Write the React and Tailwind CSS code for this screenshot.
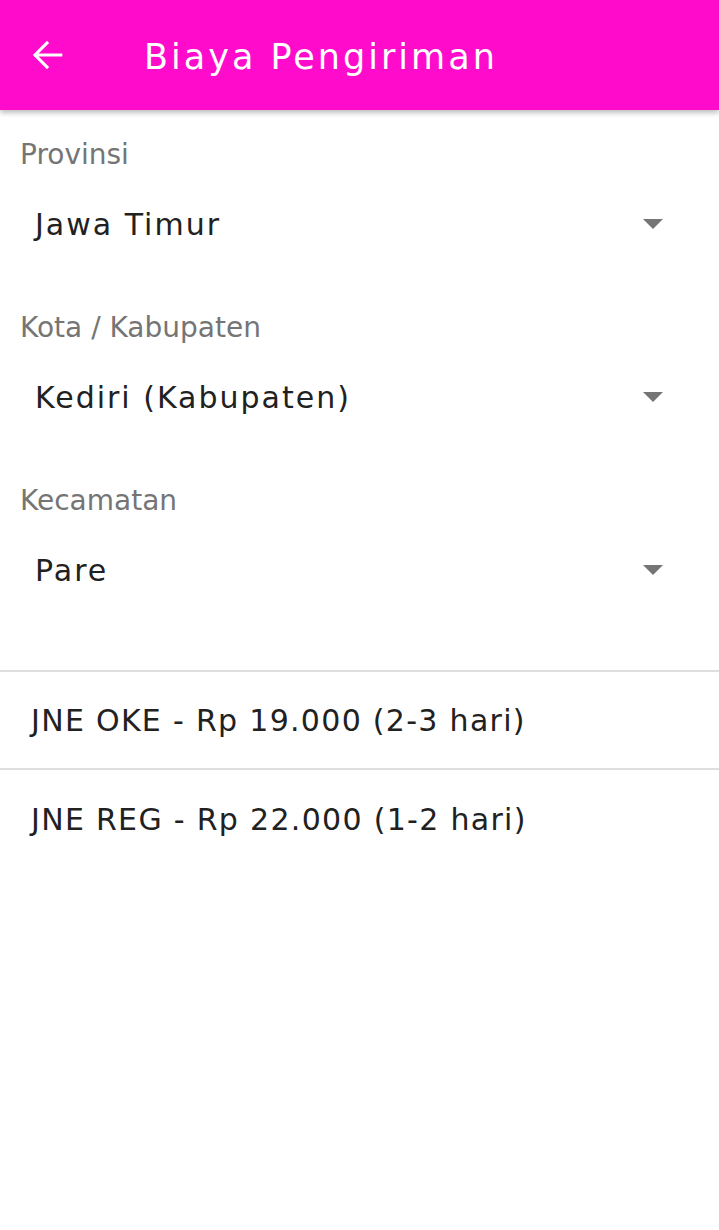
const FONT = { fontFamily: '"DejaVu Sans", "Liberation Sans", sans-serif' }

const FIELDS = [
  { label: 'Provinsi', value: 'Jawa Timur' },
  { label: 'Kota / Kabupaten', value: 'Kediri (Kabupaten)' },
  { label: 'Kecamatan', value: 'Pare' },
]

const SERVICES = [
  'JNE OKE - Rp 19.000 (2-3 hari)',
  'JNE REG - Rp 22.000 (1-2 hari)',
]

// material arrow_back
function BackArrow() {
  return (
    <svg width="46" height="46" viewBox="0 0 24 24" fill="white">
      <path d="M20 11.2H7.6l5.5-5.5L12 4.6l-7.4 7.4 7.4 7.4 1.1-1.1-5.5-5.5H20v-1.6z" />
    </svg>
  )
}

function SelectField({ label, value }) {
  return (
    <div className="flex flex-col">
      <div className="h-[40px] flex items-center pl-[20px] text-[28px] text-[#757575]">{label}</div>
      <div className="h-[98px] flex items-center pl-[35px] pr-[56px] justify-between">
        <span className="text-[30px] tracking-[2px] text-[#212121]">{value}</span>
        <span className="w-0 h-0 border-l-[10px] border-r-[10px] border-t-[10px] border-l-transparent border-r-transparent border-t-[#757575]" />
      </div>
    </div>
  )
}

export default function App() {
  return (
    <div className="w-[719px] h-[1230px] bg-white relative" style={FONT}>
      <div className="h-[110px] bg-[#ff0bcb] flex items-center shadow-[0_3px_5px_rgba(0,0,0,0.25)] relative z-10">
        <div className="w-[144px] pl-[24px] flex items-center"><BackArrow /></div>
        <h1 className="text-[35px] tracking-[3px] text-white pt-[4px]">Biaya Pengiriman</h1>
      </div>
      <div className="pt-[25px] flex flex-col gap-[35px]">
        {FIELDS.map((f) => (
          <SelectField key={f.label} label={f.label} value={f.value} />
        ))}
      </div>
      <div className="mt-[51px] border-t-2 border-[#dedede]">
        {SERVICES.map((s) => (
          <div key={s} className="h-[98px] flex items-center pl-[31px] text-[30px] tracking-[1.3px] text-[#212121] border-b-2 border-[#dedede] last:border-b-0">
            {s}
          </div>
        ))}
      </div>
    </div>
  )
}
